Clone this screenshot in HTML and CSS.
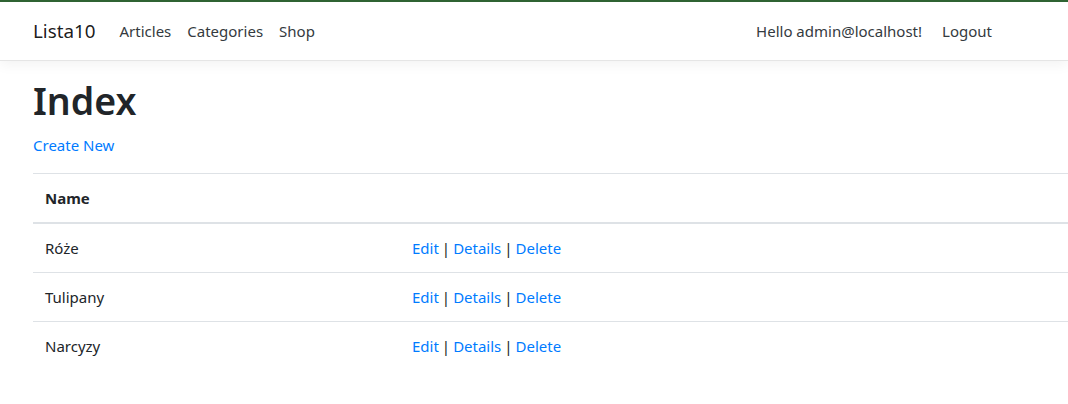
FILE: index.html
```html
<!DOCTYPE html>
<html lang="pl">
<head>
<meta charset="utf-8">
<title>Index - Lista10</title>
<link rel="stylesheet" href="styles.css">
</head>
<body>
<header class="navbar">
  <div class="nav-inner">
    <a class="brand" href="#">Lista10</a>
    <ul class="nav-list">
      <li><a class="nav-link" href="#">Articles</a></li>
      <li><a class="nav-link" href="#">Categories</a></li>
      <li><a class="nav-link" href="#">Shop</a></li>
    </ul>
    <ul class="nav-list nav-right">
      <li><a class="nav-link" href="#">Hello admin@localhost!</a></li>
      <li><button class="btn-link" type="button">Logout</button></li>
    </ul>
  </div>
</header>
<main class="container">
  <h1 class="title">Index</h1>
  <p class="create"><a href="#">Create New</a></p>
  <table class="table">
    <thead>
      <tr><th class="col-name">Name</th><th></th></tr>
    </thead>
    <tbody>
      <tr><td>Róże</td><td><a href="#">Edit</a><span class="sep">|</span><a href="#">Details</a><span class="sep">|</span><a href="#">Delete</a></td></tr>
      <tr><td>Tulipany</td><td><a href="#">Edit</a><span class="sep">|</span><a href="#">Details</a><span class="sep">|</span><a href="#">Delete</a></td></tr>
      <tr><td>Narcyzy</td><td><a href="#">Edit</a><span class="sep">|</span><a href="#">Details</a><span class="sep">|</span><a href="#">Delete</a></td></tr>
    </tbody>
  </table>
</main>
</body>
</html>
```
FILE: styles.css
```css
html, body {
  margin: 0;
  padding: 0;
}
body {
  font-family: "Noto Sans", "Open Sans", sans-serif;
  font-size: 15px;
  line-height: 24px;
  color: #212529;
  background: #fff;
}
a {
  color: #007bff;
  text-decoration: none;
}
.navbar {
  border-top: 2px solid #2f6332;
  border-bottom: 1px solid #e5e5e5;
  box-shadow: 0 4px 12px rgba(0, 0, 0, 0.05);
  margin-bottom: 16px;
  background: #fff;
}
.nav-inner {
  display: flex;
  align-items: center;
  height: 58px;
  padding: 0 64px 0 33px;
}
.brand {
  font-size: 18.8px;
  line-height: 30px;
  color: rgba(0, 0, 0, 0.9);
  margin-right: 16px;
}
.nav-list {
  display: flex;
  list-style: none;
  margin: 0;
  padding: 0;
  align-items: center;
}
.nav-right {
  margin-left: auto;
}
.nav-link {
  display: block;
  padding: 8px;
  color: #343a40;
}
.btn-link {
  font: inherit;
  color: #343a40;
  background: none;
  border: 0;
  padding: 6px 12px;
}
.container {
  padding-left: 33px;
}
.title {
  font-size: 37.5px;
  font-weight: 600;
  line-height: 48px;
  margin: 0 0 8px;
}
.create {
  margin: 0 0 16px;
}
.table {
  width: 100%;
  border-collapse: collapse;
}
.table th,
.table td {
  padding: 12px;
  text-align: left;
  vertical-align: top;
  border-top: 1px solid #dee2e6;
}
.table thead th {
  border-bottom: 2px solid #dee2e6;
  font-weight: 700;
}
.col-name {
  width: 343px;
}
.sep {
  margin: 0 3px;
}
```
